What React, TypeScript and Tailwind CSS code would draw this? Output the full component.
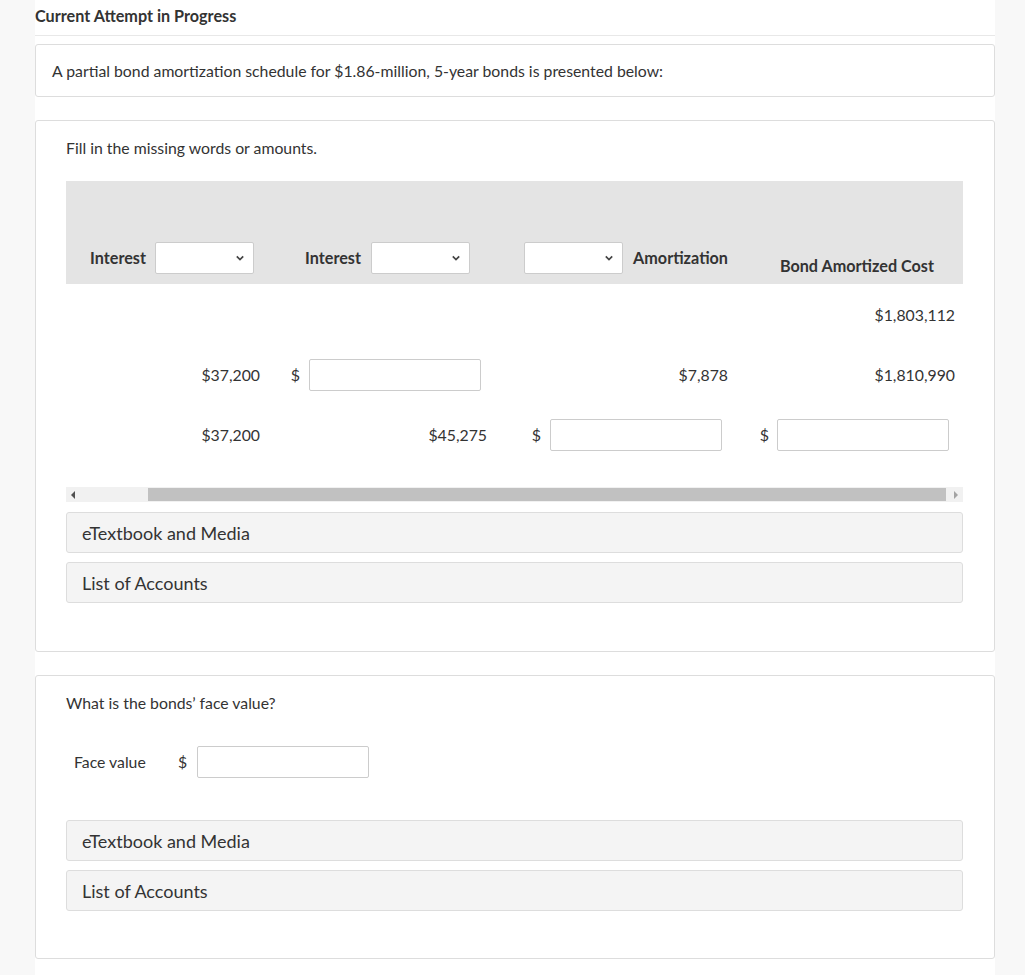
import React from 'react';

const font = { fontFamily: 'Lato, "Open Sans", Arial, sans-serif' };

function Chevron() {
  return (
    <svg width="10" height="10" viewBox="0 0 10 10" className="text-[#444]">
      <path d="M1.8 3.4 L5 6.6 L8.2 3.4" fill="none" stroke="currentColor" strokeWidth="1.7" />
    </svg>
  );
}

function Select() {
  return (
    <div className="flex h-[32px] w-[99px] items-center justify-end rounded-[2px] border border-[#cccccc] bg-white pr-[8px]">
      <Chevron />
    </div>
  );
}

function Input({ w = 'w-[172px]' }: { w?: string }) {
  return <div className={`h-[32px] ${w} rounded-[2px] border border-[#cccccc] bg-white`} />;
}

function Money() {
  return <span className="text-[16px] text-[#333]">$</span>;
}

function Accordion({ label }: { label: string }) {
  return (
    <div className="flex h-[41px] items-center rounded-[3px] border border-[#dddddd] bg-[#f4f4f4] pl-[15px] pt-[1px] text-[18px] text-[#333]">
      {label}
    </div>
  );
}

function Scrollbar() {
  return (
    <div className="flex h-[15px] items-center bg-[#f1f1f1]">
      <div className="flex w-[82px] items-center pl-[5px]">
        <div className="h-0 w-0 border-y-[4px] border-r-[4px] border-y-transparent border-r-[#505050]" />
      </div>
      <div className="h-[13px] flex-1 bg-[#c1c1c1]" />
      <div className="flex w-[17px] items-center justify-end pr-[5px]">
        <div className="h-0 w-0 border-y-[4px] border-l-[4px] border-y-transparent border-l-[#a3a3a3]" />
      </div>
    </div>
  );
}

function Schedule() {
  const row = 'flex h-[60px] items-center text-[15.8px] text-[#333]';
  return (
    <div>
      <div className="flex h-[103px] items-end bg-[#e4e4e4] text-[16.2px] font-bold text-[#333]">
        <div className="flex w-[204px] items-center justify-end gap-[9px] pb-[10px] pr-[16px]">
          <span>Interest</span>
          <Select />
        </div>
        <div className="flex w-[220px] items-center justify-end gap-[10px] pb-[10px] pr-[20px]">
          <span>Interest</span>
          <Select />
        </div>
        <div className="flex w-[250px] items-center justify-end gap-[10px] pb-[10px] pr-[12px]">
          <Select />
          <span>Amortization</span>
        </div>
        <div className="flex flex-1 justify-end pb-[6px] pr-[29px]">
          <span>Bond Amortized Cost</span>
        </div>
      </div>

      <div className="pt-[1px]">
        <div className={row}>
          <div className="w-[204px]" />
          <div className="w-[220px]" />
          <div className="w-[250px]" />
          <div className="flex-1 pr-[8px] text-right">$1,803,112</div>
        </div>

        <div className={row}>
          <div className="w-[204px] pr-[10px] text-right">$37,200</div>
          <div className="flex w-[220px] items-center justify-end gap-[9px] pr-[9px]">
            <Money />
            <Input />
          </div>
          <div className="w-[250px] pr-[12px] text-right">$7,878</div>
          <div className="flex-1 pr-[8px] text-right">$1,810,990</div>
        </div>

        <div className={row}>
          <div className="w-[204px] pr-[10px] text-right">$37,200</div>
          <div className="w-[220px] pr-[3px] text-right">$45,275</div>
          <div className="flex w-[250px] items-center justify-end gap-[9px] pr-[18px]">
            <Money />
            <Input />
          </div>
          <div className="flex flex-1 items-center justify-end gap-[8px] pr-[14px]">
            <Money />
            <Input />
          </div>
        </div>
      </div>

      <div className="mt-[22px]">
        <Scrollbar />
      </div>
    </div>
  );
}

export default function App() {
  return (
    <div className="flex min-h-[975px] bg-[#f8f8f8]" style={font}>
      <div className="ml-[35px] w-[960px] bg-white">
        <div className="flex h-[36px] items-center border-b border-[#e8e8e8] pb-[2px] text-[16.2px] font-bold text-[#333]">
          Current Attempt in Progress
        </div>

        <div className="mt-[8px] flex h-[53px] items-center rounded-[3px] border border-[#dddddd] pl-[16px] text-[15.8px] text-[#333]">
          A partial bond amortization schedule for $1.86-million, 5-year bonds is presented below:
        </div>

        <div className="mt-[23px] rounded-[3px] border border-[#dddddd] pb-[48px] pl-[30px] pr-[31px] pt-[17px]">
          <div className="h-[20px] text-[15.8px] leading-[20px] text-[#333]">Fill in the missing words or amounts.</div>
          <div className="mt-[23px]">
            <Schedule />
          </div>
          <div className="mt-[10px] flex flex-col gap-[9px]">
            <Accordion label="eTextbook and Media" />
            <Accordion label="List of Accounts" />
          </div>
        </div>

        <div className="mt-[23px] rounded-[3px] border border-[#dddddd] pb-[47px] pl-[30px] pr-[31px] pt-[17px]">
          <div className="h-[20px] text-[15.8px] leading-[20px] text-[#333]">What is the bonds’ face value?</div>
          <div className="mt-[33px] flex h-[32px] items-center text-[15.8px] text-[#333]">
            <span className="w-[104px] pl-[8px]">Face value</span>
            <span className="w-[27px] pl-[8px]">$</span>
            <Input />
          </div>
          <div className="mt-[42px] flex flex-col gap-[9px]">
            <Accordion label="eTextbook and Media" />
            <Accordion label="List of Accounts" />
          </div>
        </div>
      </div>
    </div>
  );
}
